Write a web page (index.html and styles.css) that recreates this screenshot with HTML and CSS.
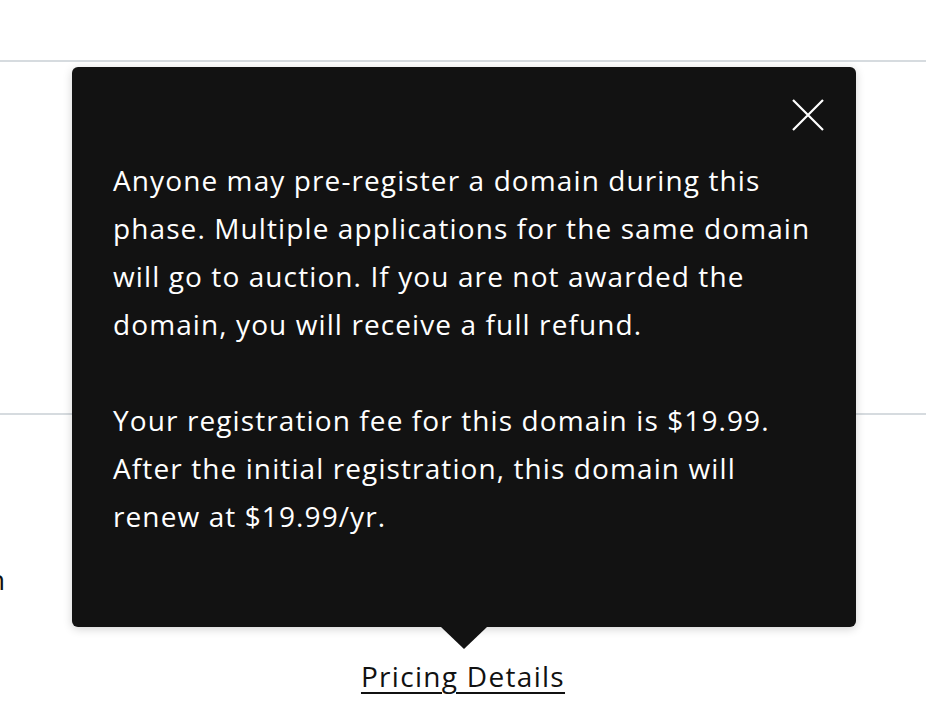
FILE: index.html
```html
<!DOCTYPE html>
<html lang="en">
<head>
<meta charset="utf-8">
<title>Pricing Details</title>
<link rel="stylesheet" href="styles.css">
</head>
<body>
<div class="page">
  <div class="header"></div>
  <div class="row"></div>
  <div class="content">
    <span class="cut">n</span>
    <div class="link-wrap">
      <a class="link" href="#">Pricing Details</a>
    </div>
  </div>
  <div class="tooltip" role="dialog">
    <button class="close" aria-label="Close">
      <svg width="32" height="32" viewBox="0 0 32 32"><path d="M1 1 L31 31 M31 1 L1 31" stroke="#fff" stroke-width="2.2" fill="none"/></svg>
    </button>
    <p>Anyone may pre-register a domain during this<br>phase. Multiple applications for the same domain<br>will go to auction. If you are not awarded the<br>domain, you will receive a full refund.</p>
    <p>Your registration fee for this domain is $19.99.<br>After the initial registration, this domain will<br>renew at $19.99/yr.</p>
  </div>
</div>
</body>
</html>
```

FILE: styles.css
```css
html, body {
  margin: 0;
  padding: 0;
  background: #fff;
}
body {
  font-family: "Open Sans", "Lato", sans-serif;
  color: #111;
  overflow: hidden;
}
.page {
  width: 926px;
  height: 728px;
  position: relative;
}
.header {
  height: 60px;
  border-bottom: 2px solid #d6dbdf;
}
.row {
  height: 351px;
  border-bottom: 2px solid #d6dbdf;
}
.content {
  position: relative;
  height: 313px;
}
.cut {
  position: absolute;
  left: -12px;
  top: 148px;
  font-size: 28px;
  line-height: 32px;
}
.link-wrap {
  padding-top: 243px;
  text-align: center;
}
.link {
  font-size: 28px;
  line-height: 36px;
  letter-spacing: 1.3px;
  color: #111;
  text-decoration: underline;
  text-underline-offset: 5px;
  text-decoration-thickness: 2px;
}
.tooltip {
  position: absolute;
  left: 72px;
  top: 67px;
  width: 784px;
  height: 560px;
  box-sizing: border-box;
  padding: 89px 20px 0 41px;
  background: #121212;
  border-radius: 6px;
  box-shadow: 0 2px 10px rgba(0,0,0,0.18);
  color: #fff;
}
.tooltip::after {
  content: "";
  position: absolute;
  left: 369px;
  bottom: -22px;
  border-left: 23px solid transparent;
  border-right: 23px solid transparent;
  border-top: 22px solid #121212;
}
.tooltip p {
  margin: 0 0 48px;
  font-size: 28px;
  line-height: 48px;
  letter-spacing: 1.1px;
  white-space: nowrap;
}
.close {
  position: absolute;
  top: 32px;
  right: 32px;
  padding: 0;
  border: 0;
  background: none;
  width: 32px;
  height: 32px;
  cursor: pointer;
}
.close svg { display: block; }
```
